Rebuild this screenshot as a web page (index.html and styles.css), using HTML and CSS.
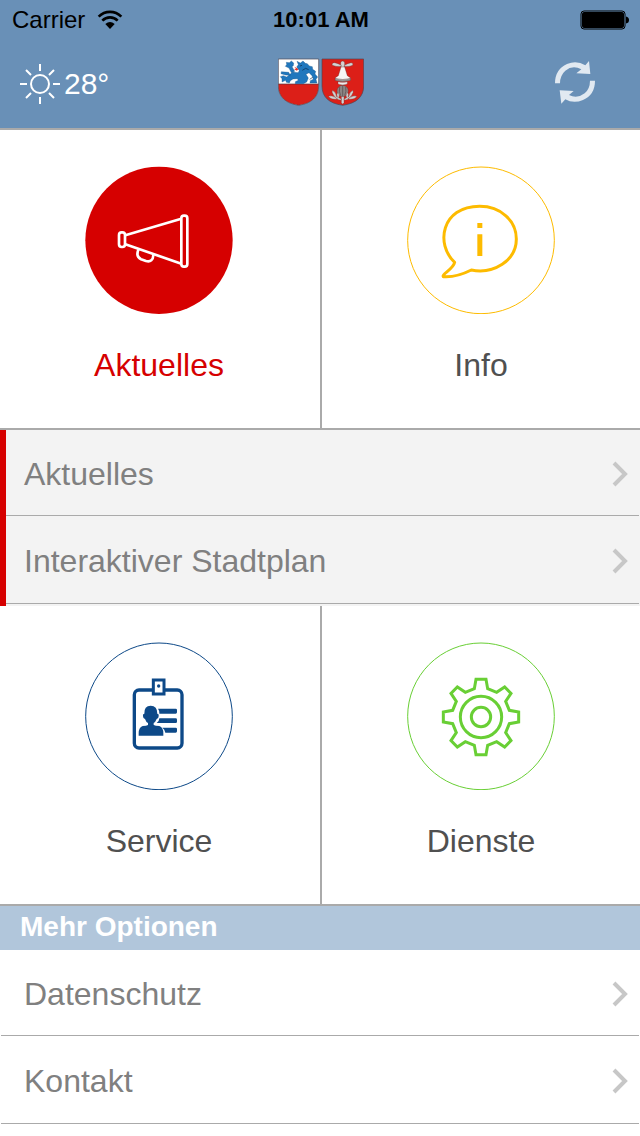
FILE: index.html
```html
<!DOCTYPE html>
<html lang="de">
	<head>
		<meta charset="UTF-8">
		<meta name="viewport" content="width=device-width, initial-scale=1.0">
		<title>Aktuelles</title>
		<link rel="stylesheet" href="styles.css">
	</head>
	<body>
		<header class="header">
			<div class="status">
				<div class="carrier">
					<span>Carrier</span>
					<svg width="26" height="20" viewBox="0 0 78 60">
						<g fill="none" stroke="#000" stroke-width="8">
							<path d="M5 20C24 1 54 1 73 20"/>
							<path d="M16 32C29 19 49 19 62 32"/>
						</g>
						<path d="M25 42Q39 30 53 42L39 57Z"/>
					</svg>
				</div>
				<span class="time">10:01 AM</span>
				<svg class="battery" width="50" height="20" viewBox="0 0 50 20">
					<rect x="1" y="1" width="44" height="18" rx="3" fill="none" stroke="#000" stroke-width="1"/>
					<rect x="2" y="2" width="42" height="16" rx="2"/>
					<path d="M46 6.500Q49 7 49 10T46 13.500Z"/>
				</svg>
			</div>
			<div class="nav">
				<div class="weather">
					<svg width="40" height="40" viewBox="0 0 40 40" fill="none" stroke="#fff" stroke-width="2">
						<circle cx="20" cy="20" r="9"/>
						<path d="M20 0V7M20 33V40M0 20H7M33 20H40M6 6L11 11M29 29L34 34M34 6L29 11M11 29L6 34"/>
					</svg>
					<span>28°</span>
				</div>
				<!-- Wappen -->
				<svg class="crest" width="86" height="48" viewBox="54 24 258 144">
					<path d="M55 27H176V108C176 140 156 160 116 166C76 160 55 140 55 108Z" fill="#fff"/>
					<path d="M55 102H176V108C176 140 156 160 116 166C76 160 55 140 55 108Z" fill="#dc1f18"/>
					<path d="M55 102H176" stroke="#4d3540" stroke-width="2"/>
					<path d="M55 27H176V108C176 140 156 160 116 166C76 160 55 140 55 108Z" fill="none" stroke="#4d4552" stroke-width="2"/>
					<g fill="#2077bd" stroke="#174f80" stroke-width="1">
						<path d="M110 51L115 44L111 34L121 39L129 33L136 40L142 41L148 48L157 50L158 58L167 64L165 72L173 81L168 88L171 99H150L151 92L160 88L156 77L147 68L138 73L145 84L140 96L130 101H106V95L115 91L112 86L99 87L91 92L88 99L79 97L77 91L66 96V86L61 80L70 77L80 81L90 73L98 66L114 68L118 62Z"/>
						<path d="M94 68L87 54L76 49L80 44L79 37L88 38L94 33L101 39L100 47L96 50L104 64Z"/>
						<path d="M91 76L77 75L63 71L64 65L75 66L86 67Z"/>
					</g>
					<path d="M103 50L115 57L111 62L102 58L108 57Z" fill="#e52b22"/>
					<path d="M120 48L126 46M127 61L137 55L146 59M149 88L158 82" stroke="#0c2b4a" stroke-width="2" fill="none"/>
					<path d="M186 27H311V108C311 140 290 160 248 166C206 160 186 140 186 108Z" fill="#dc1f18" stroke="#4d4552" stroke-width="2"/>
					<g fill="#d3d3d3" stroke="#5a2c2c" stroke-width="1">
						<path d="M244 53Q238 33 248 33Q258 33 252 53Z"/>
						<path d="M243 49Q229 51 217 46Q214 38 224 38Q234 40 244 46Z"/>
						<path d="M253 46Q263 40 273 38Q281 39 278 46Q267 51 253 49Z"/>
						<path d="M243 51H254L262 77L271 83V91Q248 98 226 91V83L235 77Z" fill="#f6f6f6"/>
						<path d="M226 85Q248 92 271 85V91Q248 98 226 91Z" fill="#999"/>
						<path d="M234 95Q248 99 262 95V102Q248 108 234 102Z" fill="#eee"/>
						<path d="M244 137V158L248 163L252 158V137Z"/>
						<circle cx="248" cy="123" r="17" fill="#8d8585"/>
						<path d="M239 111Q236 124 242 137M248 107V139M257 111Q260 124 254 137" fill="none" stroke="#554848" stroke-width="2"/>
						<path d="M242 151Q227 148 220 134Q214 126 217 121Q228 126 229 138L232 142Q229 133 233 127Q241 135 236 143L244 147Z"/>
						<path d="M254 151Q269 148 276 134Q282 126 279 121Q268 126 267 138L264 142Q267 133 263 127Q255 135 260 143L252 147Z"/>
						<path d="M226 142Q212 135 205 139Q213 150 232 147ZM270 142Q284 135 291 139Q283 150 264 147Z"/>
					</g>
				</svg>
				<button class="refresh" type="button" aria-label="Aktualisieren">
					<svg width="40" height="44" viewBox="0 0 120 132" fill="#e1e9f1">
						<path d="M0 70Q0 28 36 12Q65 0 91 16L102 3L106 42L64 40L79 28Q53 14 31 32Q15 46 15 70Z"/>
						<path d="M120 62Q120 104 84 120Q55 132 31 118L19 131L14 91L56 93L42 105Q66 118 89 100Q105 86 105 62Z"/>
					</svg>
				</button>
			</div>
		</header>

		<main>
			<nav class="tiles">
				<a class="tile active" href="#aktuelles">
					<svg class="icon" viewBox="16 16 444 444">
						<circle cx="238" cy="239" r="221" fill="#d60000"/>
						<g fill="none" stroke="#fff" stroke-width="8" stroke-linejoin="round">
							<rect x="118" y="215" width="18" height="44" rx="8"/>
							<rect x="305" y="165" width="18" height="153" rx="8"/>
							<path d="M137 224L305 174M137 251L305 309"/>
							<path d="M176 267Q168 289 184 296L199 301Q220 306 221 283"/>
						</g>
					</svg>
					<span>Aktuelles</span>
				</a>
				<a class="tile" href="#info">
					<svg class="icon" viewBox="25 16 444 444">
						<circle cx="247" cy="239" r="220" fill="none" stroke="#fdbb00" stroke-width="3"/>
						<path d="M168 305C110 252 127 137 243 137C306 137 353 180 353 235C353 300 285 341 218 328C190 342 160 350 134 348C128 341 164 326 168 305Z" fill="none" stroke="#fdbb00" stroke-width="9" stroke-linejoin="round"/>
						<path d="M236 187H251V202H236ZM236 221H251V286H236Z" fill="#fdbb00"/>
					</svg>
					<span>Info</span>
				</a>
			</nav>

			<ul class="list sub">
				<li><a href="#aktuelles"><span>Aktuelles</span><svg class="arrow" viewBox="0 0 16 26"><path d="M2 2L13 13L2 24"/></svg></a></li>
				<li><a href="#stadtplan"><span>Interaktiver Stadtplan</span><svg class="arrow" viewBox="0 0 16 26"><path d="M2 2L13 13L2 24"/></svg></a></li>
			</ul>

			<nav class="tiles">
				<a class="tile" href="#service">
					<svg class="icon" viewBox="16 16 444 444">
						<circle cx="238" cy="239" r="220" fill="none" stroke="#0d4988" stroke-width="3"/>
						<rect x="164" y="160" width="143" height="174" rx="14" fill="none" stroke="#0d4988" stroke-width="10"/>
						<rect x="221" y="130" width="32" height="42" fill="#fff" stroke="#0d4988" stroke-width="9"/>
						<circle cx="237" cy="148" r="5" fill="#0d4988"/>
						<g fill="#0d4988">
							<path d="M235 216H288Q292 216 292 220V227Q292 231 288 231H239Q240 222 235 216Z"/>
							<path d="M239 245H288Q292 245 292 249V255Q292 259 288 259H231Q239 253 239 245Z"/>
							<path d="M248 273H288Q292 273 292 277V284Q292 288 288 288H257Q255 277 248 273Z"/>
							<path d="M213 207Q233 207 233 231Q239 232 237 239Q237 246 231 247Q227 257 222 259V265Q227 268 239 268Q251 272 251 290V297H177V290Q177 272 189 268Q201 268 205 265V259Q199 256 196 247Q190 246 190 239Q188 232 194 231Q193 207 213 207Z"/>
						</g>
					</svg>
					<span>Service</span>
				</a>
				<a class="tile" href="#dienste">
					<svg class="icon" viewBox="-222 -225 444 444">
						<g fill="none" stroke="#69cf35">
							<circle cx="0" cy="-2" r="220" stroke-width="3"/>
							<g stroke-width="9">
								<circle r="62"/>
								<circle r="29"/>
								<path d="M-15 -113H15L20 -85L47 -74L71 -90L90 -71L74 -47L85 -20L113 -15V15L85 20L74 47L90 71L71 90L47 74L20 85L15 113H-15L-20 85L-47 74L-71 90L-90 71L-74 47L-85 20L-113 15V-15L-85 -20L-74 -47L-90 -71L-71 -90L-47 -74L-20 -85Z"/>
							</g>
						</g>
					</svg>
					<span>Dienste</span>
				</a>
			</nav>

			<h2 class="title">Mehr Optionen</h2>
			<ul class="list">
				<li><a href="#datenschutz"><span>Datenschutz</span><svg class="arrow" viewBox="0 0 16 26"><path d="M2 2L13 13L2 24"/></svg></a></li>
				<li><a href="#kontakt"><span>Kontakt</span><svg class="arrow" viewBox="0 0 16 26"><path d="M2 2L13 13L2 24"/></svg></a></li>
			</ul>
		</main>
	</body>
</html>
```
FILE: styles.css
```css
* {
	margin: 0;
	padding: 0;
	box-sizing: border-box;
}

body {
	background-color: #fff;
	font-family: "Liberation Sans", Arial, sans-serif;
	font-size: 32px;
	line-height: 36px;
}

a {
	color: inherit;
	text-decoration: none;
}

svg {
	display: block;
	flex-shrink: 0;
}

/* header */
.header {
	background-color: #6990b7;
	border-bottom: 2px solid #aaa;
}

.status,
.nav {
	display: grid;
	grid-template-columns: 1fr auto 1fr;
	align-items: center;
}

.status {
	height: 40px;
	padding: 0 10px 0 12px;
	font-size: 24px;
}

.carrier {
	display: flex;
	align-items: center;
	gap: 12px;
}

.time {
	font-size: 22px;
	font-weight: bold;
}

.battery {
	justify-self: end;
}

.nav {
	height: 88px;
	padding: 0 45px 4px 20px;
}

.weather {
	display: flex;
	align-items: center;
	gap: 4px;
	padding-top: 4px;
	color: #fff;
	font-size: 30px;
}

.crest {
	margin-left: 27px;
}

.refresh {
	justify-self: end;
	border: none;
	background: none;
	cursor: pointer;
}

/* tiles */
.tiles {
	display: grid;
	grid-template-columns: 1fr 1fr;
	border-bottom: 2px solid #aaa;
}

.tile {
	display: flex;
	flex-direction: column;
	align-items: center;
	gap: 33px;
	padding: 36px 0 45px;
	color: #505050;
}

.tile:first-child {
	padding-right: 2px;
}

.tile + .tile {
	border-left: 2px solid #aaa;
}

.tile.active {
	color: #d60000;
}

.icon {
	width: 148px;
	height: 148px;
}

/* lists */
.list {
	padding: 0 1px;
	list-style: none;
	color: #808080;
}

.list a {
	display: flex;
	justify-content: space-between;
	align-items: center;
	height: 88px;
	padding: 2px 11px 0 23px;
	border-bottom: 1px solid #aaa;
}

.list li:first-child a {
	height: 86px;
}

.sub {
	padding: 0 1px 2px 0;
	border-left: 6px solid #d60000;
	background-color: #f3f3f3;
}

.sub a {
	padding-left: 18px;
}

.arrow {
	width: 16px;
	height: 26px;
	fill: none;
	stroke: #c7c7c7;
	stroke-width: 4;
}

.title {
	padding: 3px 20px 5px;
	background-color: #b1c6db;
	color: #fff;
	font-size: 28px;
}
```
